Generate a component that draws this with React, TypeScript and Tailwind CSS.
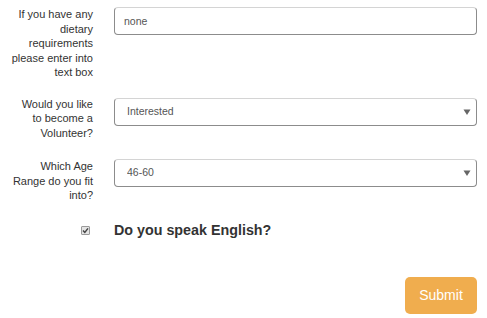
import { useState } from 'react'

const labelCls = 'w-[83px] shrink-0 text-right text-[11px] leading-[14.5px] text-[#333]'
const inputCls =
  'h-[28px] w-full rounded-[4px] border border-[#8c8c8c] border-t-[#d4d4d4] bg-white px-[9px] text-[10.5px] text-[#555] outline-none'

function Caret() {
  return (
    <svg className="pointer-events-none absolute right-[6px] top-[10px] h-[8px] w-[8px]" viewBox="0 0 8 8">
      <polygon points="0.5,1.5 7.5,1.5 4,7" fill="#666" />
    </svg>
  )
}

export default function App() {
  const [diet, setDiet] = useState('none')
  const [volunteer, setVolunteer] = useState('Interested')
  const [age, setAge] = useState('46-60')
  const [english, setEnglish] = useState(true)

  return (
    <div className="h-[318px] w-[487px] bg-white pl-[10px] pr-[10px] pt-[7px]" style={{ fontFamily: '"Liberation Sans", Arial, sans-serif' }}>
      <div className="flex gap-[21px]">
        <label className={labelCls}>If you have any dietary requirements please enter into text box</label>
        <input className={inputCls} value={diet} onChange={e => setDiet(e.target.value)} />
      </div>

      <div className="mt-[18px] flex gap-[21px]">
        <label className={`${labelCls} -mt-[1px]`}>Would you like to become a Volunteer?</label>
        <div className="relative w-full">
          <select className={`${inputCls} appearance-none pl-[12px]`} value={volunteer} onChange={e => setVolunteer(e.target.value)}>
            <option>Interested</option>
            <option>Yes</option>
            <option>No</option>
          </select>
          <Caret />
        </div>
      </div>

      <div className="mt-[19px] flex gap-[21px]">
        <label className={labelCls}>Which Age Range do you fit into?</label>
        <div className="relative w-full">
          <select className={`${inputCls} appearance-none pl-[12px]`} value={age} onChange={e => setAge(e.target.value)}>
            <option>18-30</option>
            <option>31-45</option>
            <option>46-60</option>
            <option>60+</option>
          </select>
          <Caret />
        </div>
      </div>

      <div className="mt-[17px] flex items-center gap-[21px]">
        <div className="flex w-[83px] shrink-0 justify-end pr-[3px]">
          <label className="relative h-[9px] w-[9px]">
            <input
              type="checkbox"
              className="absolute inset-0 h-[9px] w-[9px] appearance-none rounded-[1px] border border-[#9a9a9a] bg-[#e4e4e4]"
              checked={english}
              onChange={e => setEnglish(e.target.checked)}
            />
            {english && (
              <svg className="pointer-events-none absolute inset-0 h-[9px] w-[9px]" viewBox="0 0 9 9">
                <polyline points="2,4.5 3.8,6.4 7,2.4" fill="none" stroke="#444" strokeWidth="1.5" />
              </svg>
            )}
          </label>
        </div>
        <span className="text-[14.3px] font-bold text-[#333]">Do you speak English?</span>
      </div>

      <div className="mt-[36px] flex justify-end">
        <button className="h-[37px] w-[72px] rounded-[5px] bg-[#f0ad4e] text-[14px] text-white">Submit</button>
      </div>
    </div>
  )
}
